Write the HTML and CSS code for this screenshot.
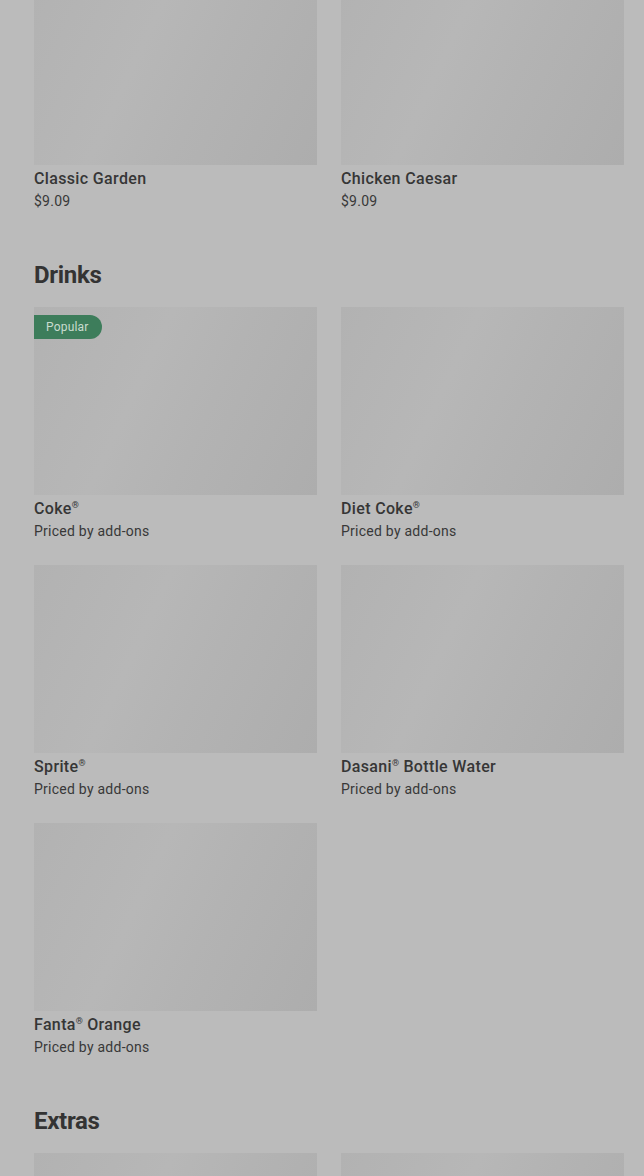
FILE: index.html
```html
<!DOCTYPE html>
<html lang="en">
<head>
    <meta charset="UTF-8">
    <meta name="viewport" content="width=device-width, initial-scale=1.0">
    <title>Menu</title>
    <link rel="stylesheet" href="styles.css">
</head>
<body>
    <div class="menu">
        <section class="section section-first">
            <div class="grid">
                <div class="item">
                    <div class="thumb"></div>
                    <div class="name">Classic Garden</div>
                    <div class="price">$9.09</div>
                </div>
                <div class="item">
                    <div class="thumb"></div>
                    <div class="name">Chicken Caesar</div>
                    <div class="price">$9.09</div>
                </div>
            </div>
        </section>

        <section class="section">
            <h2>Drinks</h2>
            <div class="grid">
                <div class="item">
                    <div class="thumb">
                        <span class="badge">Popular</span>
                    </div>
                    <div class="name">Coke<span class="reg">®</span></div>
                    <div class="price">Priced by add-ons</div>
                </div>
                <div class="item">
                    <div class="thumb"></div>
                    <div class="name">Diet Coke<span class="reg">®</span></div>
                    <div class="price">Priced by add-ons</div>
                </div>
                <div class="item">
                    <div class="thumb"></div>
                    <div class="name">Sprite<span class="reg">®</span></div>
                    <div class="price">Priced by add-ons</div>
                </div>
                <div class="item">
                    <div class="thumb"></div>
                    <div class="name">Dasani<span class="reg">®</span> Bottle Water</div>
                    <div class="price">Priced by add-ons</div>
                </div>
                <div class="item">
                    <div class="thumb"></div>
                    <div class="name">Fanta<span class="reg">®</span> Orange</div>
                    <div class="price">Priced by add-ons</div>
                </div>
            </div>
        </section>

        <section class="section">
            <h2>Extras</h2>
            <div class="grid">
                <div class="item">
                    <div class="thumb"></div>
                </div>
                <div class="item">
                    <div class="thumb"></div>
                </div>
            </div>
        </section>
    </div>
</body>
</html>
```
FILE: styles.css
```css
body {
    margin: 0;
    background-color: #bbbbbb;
    font-family: Roboto, "Liberation Sans", sans-serif;
    color: #333333;
    overflow: hidden;
}
.menu {
    width: 590px;
    padding-left: 34px;
}
.section {
    margin-top: 48px;
}
.section-first {
    margin-top: -23px;
}
h2 {
    margin: 0 0 16px;
    font-size: 24px;
    line-height: 32px;
    font-weight: 700;
    letter-spacing: -0.3px;
    color: #333333;
}
.grid {
    display: grid;
    grid-template-columns: 283px 283px;
    column-gap: 24px;
    row-gap: 24px;
}
.thumb {
    position: relative;
    height: 188px;
    background: linear-gradient(115deg, #b2b2b2 0%, #b7b7b7 38%, #b3b3b3 60%, #adadad 100%);
}
.badge {
    position: absolute;
    top: 8px;
    left: 0;
    height: 24px;
    line-height: 24px;
    padding: 0 13px 0 12px;
    background-color: #3d7d5b;
    color: #c9dccf;
    font-size: 12px;
    letter-spacing: 0.2px;
    border-radius: 0 12px 12px 0;
}
.name {
    margin-top: 4px;
    font-size: 16px;
    line-height: 20px;
    font-weight: 500;
    letter-spacing: 0.35px;
    color: #363636;
}
.reg {
    font-size: 9px;
    line-height: 0;
    vertical-align: 6px;
    letter-spacing: 0;
}
.price {
    margin-top: 2px;
    font-size: 14px;
    line-height: 20px;
    letter-spacing: 0.25px;
    color: #383838;
}
```
